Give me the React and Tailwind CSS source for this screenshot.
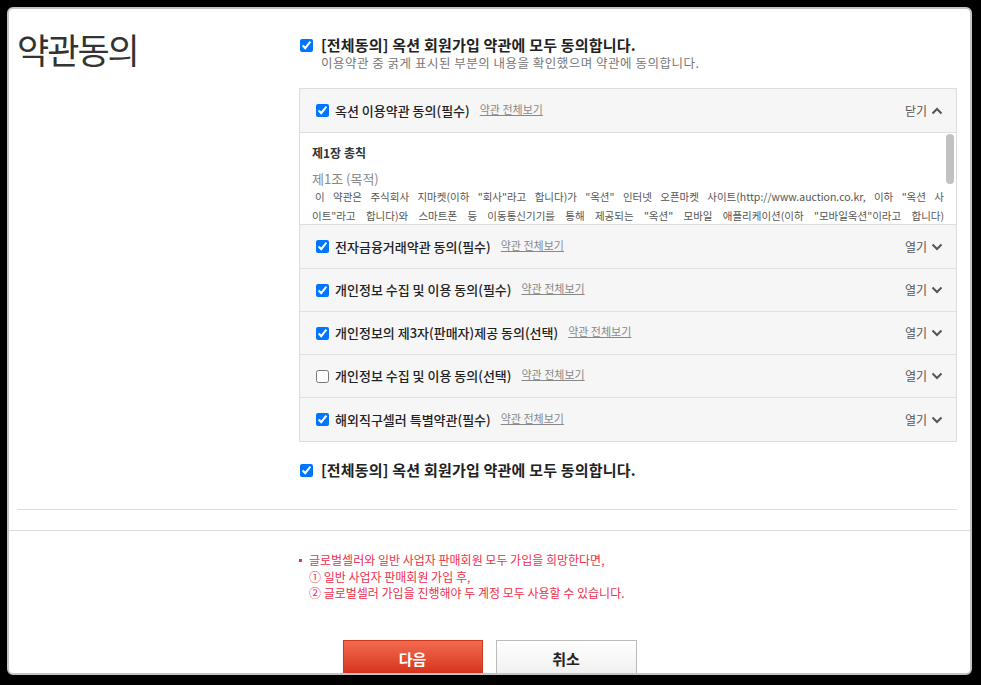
import React from 'react';

const terms = [
  { label: '전자금융거래약관 동의(필수)', checked: true, h: 'h-[43px]', first: true },
  { label: '개인정보 수집 및 이용 동의(필수)', checked: true, h: 'h-[43px]' },
  { label: '개인정보의 제3자(판매자)제공 동의(선택)', checked: true, h: 'h-[43px]' },
  { label: '개인정보 수집 및 이용 동의(선택)', checked: false, h: 'h-[43px]' },
  { label: '해외직구셀러 특별약관(필수)', checked: true, h: 'h-[44px]' },
];

const Chevron = ({ up }) => (
  <svg width="12" height="8" viewBox="0 0 12 8" className="ml-[4px]">
    <polyline
      points={up ? '1.5,6.5 6,2 10.5,6.5' : '1.5,1.5 6,6 10.5,1.5'}
      fill="none"
      stroke="#555"
      strokeWidth="2"
    />
  </svg>
);

const TermRow = ({ label, checked, open, h, first }) => (
  <div
    className={`flex items-center justify-between pl-[16px] pr-[13px] bg-[#f6f6f6] ${h} ${
      first ? '' : 'border-t border-[#e0e0e0]'
    }`}
  >
    <label className="flex items-center">
      <input type="checkbox" defaultChecked={checked} className="w-[13px] h-[13px]" />
      <span className="ml-[6px] text-[13px] font-medium text-[#222] leading-[18px]">{label}</span>
      <a href="#" className="ml-[10px] mb-[4px] text-[11px] text-[#888] underline leading-[14px]">
        약관 전체보기
      </a>
    </label>
    <span className="flex items-center text-[12px] text-[#555]">
      {open ? '닫기' : '열기'}
      <Chevron up={open} />
    </span>
  </div>
);

export default function App() {
  return (
    <div className="w-[981px] h-[685px] bg-black pt-[7px] pl-[7px] overflow-hidden font-['Noto_Sans_CJK_KR','Noto_Sans',sans-serif]">
      <div className="w-[965px] h-[668px] bg-white border-2 border-[#c4c4c4] rounded-[6px] overflow-hidden">
        {/* top section */}
        <div className="ml-[8px] mr-[13px] border-b border-[#ddd] flex pb-[29px]">
          <div className="w-[282px] pt-[22px]">
            <h1 className="text-[35px] leading-[35px] tracking-[-2px] text-[#333] font-normal">약관동의</h1>
          </div>
          <div className="w-[658px] pt-[26px]">
            <label className="flex items-center h-[20px] pl-[1px]">
              <input type="checkbox" defaultChecked className="w-[13px] h-[13px]" />
              <span className="ml-[8px] text-[15px] tracking-[0.2px] font-bold text-[#222]">
                [전체동의] 옥션 회원가입 약관에 모두 동의합니다.
              </span>
            </label>
            <p className="h-[16px] pl-[22px] text-[12.5px] tracking-[0.5px] leading-[16px] text-[#777]">
              이용약관 중 굵게 표시된 부분의 내용을 확인했으며 약관에 동의합니다.
            </p>

            <div className="mt-[17px] border border-[#ddd] bg-[#f6f6f6]">
              <TermRow label="옥션 이용약관 동의(필수)" checked open h="h-[43px]" first />
              <div className="relative h-[93px] border-y border-[#ddd] bg-white overflow-hidden">
                <div className="pl-[12px] pr-[12px] pt-[12px]">
                  <p className="text-[12px] font-bold text-[#333] leading-[16px]">제1장 총칙</p>
                  <p className="mt-[10px] text-[13px] text-[#888] leading-[16px]">제1조 (목적)</p>
                  <div className="text-[10.5px] leading-[19px] text-[#555]">
                    <p className="whitespace-nowrap text-justify [text-align-last:justify] pl-[3px]">
                      이 약관은 주식회사 지마켓(이하 "회사"라고 합니다)가 "옥션" 인터넷 오픈마켓 사이트(http://www.auction.co.kr, 이하 "옥션 사
                    </p>
                    <p className="whitespace-nowrap text-justify [text-align-last:justify]">
                      이트"라고 합니다)와 스마트폰 등 이동통신기기를 통해 제공되는 "옥션" 모바일 애플리케이션(이하 "모바일옥션"이라고 합니다)
                    </p>
                  </div>
                </div>
                <div className="absolute right-[2px] top-[1px] w-[8px] h-[50px] rounded-full bg-[#c1c1c1]" />
              </div>
              {terms.map((t) => (
                <TermRow key={t.label} {...t} />
              ))}
            </div>

            <label className="flex items-center h-[20px] mt-[18px] pl-[1px]">
              <input type="checkbox" defaultChecked className="w-[13px] h-[13px]" />
              <span className="ml-[8px] text-[15px] tracking-[0.2px] font-bold text-[#222]">
                [전체동의] 옥션 회원가입 약관에 모두 동의합니다.
              </span>
            </label>
          </div>
        </div>

        {/* bottom section */}
        <div className="mt-[20px] border-t border-[#ddd]">
          <div className="pl-[290px] pt-[21px] flex text-[12px] leading-[16.5px] text-[#f0304c]">
            <div className="w-[10px] pt-[7px]">
              <div className="w-[3px] h-[3px] bg-[#f0304c]" />
            </div>
            <div>
              <p>글로벌셀러와 일반 사업자 판매회원 모두 가입을 희망한다면,</p>
              <p>① 일반 사업자 판매회원 가입 후,</p>
              <p>② 글로벌셀러 가입을 진행해야 두 계정 모두 사용할 수 있습니다.</p>
            </div>
          </div>
          <div className="mt-[38px] flex justify-center gap-[13px]">
            <button className="w-[140px] h-[40px] border border-[#c8391d] bg-gradient-to-b from-[#f26a50] to-[#d2230a] text-white text-[15px] font-bold">
              다음
            </button>
            <button className="w-[141px] h-[40px] border border-[#bbb] bg-gradient-to-b from-white to-[#eee] text-[#222] text-[15px] font-bold">
              취소
            </button>
          </div>
        </div>
      </div>
    </div>
  );
}
